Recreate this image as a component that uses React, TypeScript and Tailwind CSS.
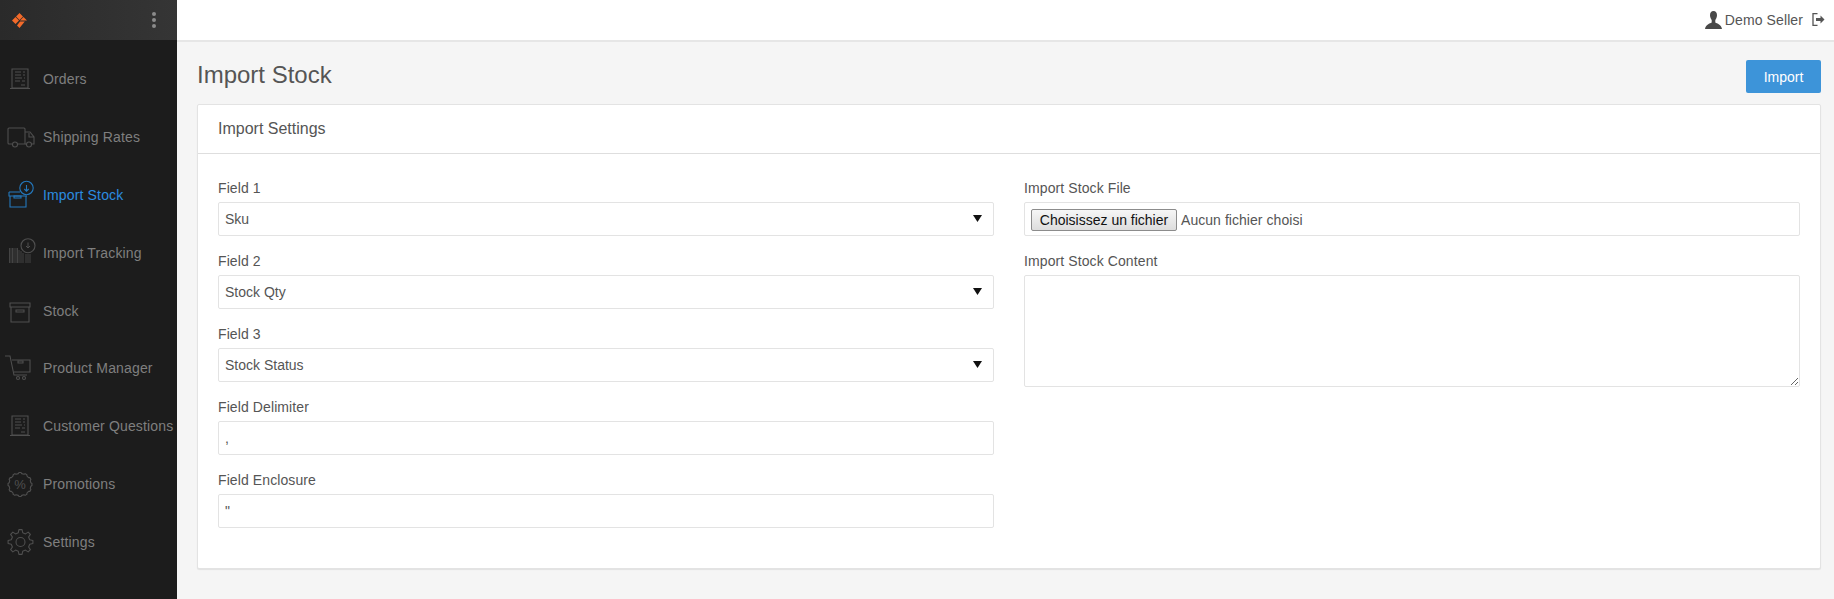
import type { ReactNode } from 'react'

const FONT = "font-['Liberation_Sans',Arial,sans-serif]"

// teeth / scallops for the settings and promotions icons
function ringPath(cx: number, cy: number, points: number, outer: number, inner: number) {
  const out: string[] = []
  for (let i = 0; i < points; i++) {
    const step = (Math.PI * 2) / points
    const a = i * step - Math.PI / 2
    const corners: [number, number][] = [
      [inner, a - step * 0.3],
      [outer, a - step * 0.16],
      [outer, a + step * 0.16],
      [inner, a + step * 0.3],
    ]
    corners.forEach(([r, t], j) => {
      const cmd = i === 0 && j === 0 ? 'M' : 'L'
      out.push(`${cmd}${(cx + r * Math.cos(t)).toFixed(2)} ${(cy + r * Math.sin(t)).toFixed(2)}`)
    })
  }
  return out.join('') + 'z'
}

function ReceiptIcon() {
  return (
    <>
      <path d="M9 8h16v19H9zM7 27.500h20" />
      <path d="M12 11h6M20 11h2M12 14h6M20 14h2M12 17h7M21 17h1M12 20h5M19 20h3M18 24h4" strokeWidth="1" />
    </>
  )
}

const ICONS: Record<string, ReactNode> = {
  orders: <ReceiptIcon />,
  shipping: (
    <>
      <path d="M9 25H6a1 1 0 0 1-1-1V10a1 1 0 0 1 1-1h15a1 1 0 0 1 1 1v15h-8" />
      <path d="M22 13h5l4 5v7h-3M22 25h1M26 14v4h5" />
      <circle cx="12" cy="25.500" r="2.500" />
      <circle cx="26" cy="25.500" r="2.500" />
    </>
  ),
  import: (
    <>
      <path d="M6 15h11M6 15v4h18M7 19v11h16V19" />
      <path d="M11 19h7v2h-7z" />
      <circle cx="23.500" cy="11" r="6.700" />
      <path d="M23.500 8v6M21.300 12l2.200 2.200 2.200-2.200" />
    </>
  ),
  tracking: (
    <>
      <path d="M6.500 13v15M8 13v15M9.500 13v15M11 13v15M13 13v15M14.500 13v15M16 15v13M18 16v12M20 18v10M23 19v9M25 19v9M27 19v9" strokeWidth=".8" />
      <circle cx="25" cy="10.700" r="7" />
      <path d="M25 7.500v5.500M23 11l2 2 2-2" strokeWidth="1" />
    </>
  ),
  stock: (
    <>
      <path d="M7 10h20v4H7zM8 14v15h18V14" />
      <path d="M13 17h8v2h-8z" />
    </>
  ),
  product: (
    <>
      <path d="M2 6h5l4 19h13" />
      <path d="M9 10h18v12H11" />
      <path d="M15 11h5v2h-5z" />
      <circle cx="15" cy="28" r="1.500" />
      <circle cx="21" cy="28" r="1.500" />
    </>
  ),
  questions: <ReceiptIcon />,
  promotions: (
    <>
      <path d={ringPath(17, 18.500, 12, 12, 11)} strokeLinejoin="round" />
      <text x="17" y="23" textAnchor="middle" fontSize="13" fill="currentColor" stroke="none" fontFamily="Liberation Sans">%</text>
    </>
  ),
  settings: (
    <>
      <path d={ringPath(17.500, 18, 8, 12.500, 9.500)} strokeLinejoin="round" />
      <circle cx="17.500" cy="18" r="4.500" />
    </>
  ),
}

const NAV = [
  { id: 'orders', label: 'Orders' },
  { id: 'shipping', label: 'Shipping Rates' },
  { id: 'import', label: 'Import Stock', active: true },
  { id: 'tracking', label: 'Import Tracking' },
  { id: 'stock', label: 'Stock' },
  { id: 'product', label: 'Product Manager' },
  { id: 'questions', label: 'Customer Questions' },
  { id: 'promotions', label: 'Promotions' },
  { id: 'settings', label: 'Settings' },
]

function Sidebar() {
  return (
    <aside className="w-[177px] shrink-0 bg-[#1c1c1c]">
      <div className="h-10 flex items-center justify-between bg-gradient-to-r from-[#2a2a2a] to-[#353535] pl-[12px] pr-[21px]">
        <svg width="15" height="15" viewBox="0 0 15 15" fill="#f26a2a">
          <path d="M7.500 0 11 3.500 7.500 7 4 3.500zM3.500 4 7 7.500 3.500 11 0 7.500zM8 7.500l3.500-3.500L15 7.500H8zM8 8.500h4.800L7.500 15 5 12.500z" />
        </svg>
        <div className="flex flex-col gap-[2px]">
          <span className="w-1 h-1 rounded-full bg-[#8b8b8b]" />
          <span className="w-1 h-1 rounded-full bg-[#8b8b8b]" />
          <span className="w-1 h-1 rounded-full bg-[#8b8b8b]" />
        </div>
      </div>
      <nav className="pt-[10px]">
        {NAV.map((item) => (
          <div
            key={item.id}
            className={`h-[57.900px] flex items-center text-sm tracking-[0.15px] whitespace-nowrap ${item.active ? 'text-[#2b8ce0]' : 'text-[#7f7f7f]'}`}
          >
            <span className={`w-[43px] shrink-0 pl-[3px] ${item.active ? 'text-[#2478bd]' : 'text-[#4f4f4f]'}`}>
              <svg width="36" height="36" viewBox="0 0 36 36" fill="none" stroke="currentColor" strokeWidth="1.100">
                {ICONS[item.id]}
              </svg>
            </span>
            {item.label}
          </div>
        ))}
      </nav>
    </aside>
  )
}

function TopBar() {
  return (
    <header className="h-[42px] bg-white border-b-2 border-[#e6e6e6] flex items-center justify-end pb-[1px] pr-[9px] text-sm text-[#555]">
      <svg width="17" height="18" viewBox="0 0 17 18" fill="#484848" className="mr-[3px]">
        <path d="M8.500 0c2.300 0 3.500 1.800 3.500 4.200 0 1.800-.8 3.600-1.700 4.800v2.500c1.800 1.200 6 1.800 6.700 6.500H0c.7-4.700 4.900-5.300 6.700-6.500V9C5.800 7.800 5 6 5 4.200 5 1.800 6.200 0 8.500 0z" />
      </svg>
      <span className="tracking-[0.1px]">Demo Seller</span>
      <svg width="13" height="13" viewBox="0 0 13 13" className="ml-[9px]" fill="none" stroke="#555" strokeWidth="1.300">
        <path d="M5.500.7H1v11.600h4.500" />
        <path d="M4 5h4.500V2.500L12.500 6.500l-4 4V8H4z" fill="#555" stroke="none" />
      </svg>
    </header>
  )
}

function Field({ label, children }: { label: string; children: ReactNode }) {
  return (
    <div className="mb-[15px]">
      <label className="block h-5 leading-5 mb-1 text-sm tracking-[0.1px] text-[#555]">{label}</label>
      {children}
    </div>
  )
}

const CONTROL = 'w-full h-[34px] bg-white border border-[#e3e3e3] rounded-[2px] px-[6px] text-sm text-[#555] outline-none'

function SelectField({ label, value }: { label: string; value: string }) {
  return (
    <Field label={label}>
      <div className="relative">
        <select defaultValue={value} className={`${CONTROL} appearance-none ${FONT}`}>
          <option>{value}</option>
        </select>
        <svg width="9" height="7" viewBox="0 0 9 7" fill="#111" className="absolute right-[12px] top-[13px]">
          <path d="M0 0h9L4.500 7z" />
        </svg>
      </div>
    </Field>
  )
}

function TextField({ label, value }: { label: string; value: string }) {
  return (
    <Field label={label}>
      <input defaultValue={value} className={`${CONTROL} ${FONT}`} />
    </Field>
  )
}

export default function App() {
  return (
    <div className={`flex h-[599px] overflow-hidden bg-[#f5f5f5] ${FONT}`}>
      <Sidebar />
      <div className="flex-1 min-w-0">
        <TopBar />
        <main className="pl-[20px] pr-[13px] pt-[18px]">
          <div className="flex items-center justify-between h-[33px] mb-[11px]">
            <h1 className="text-2xl text-[#555] pb-[3px]">Import Stock</h1>
            <button className="w-[75px] h-[33px] bg-[#3d94d9] text-white text-sm rounded-[2px]">Import</button>
          </div>
          <section className="bg-white border border-[#e3e3e3] rounded-[2px] shadow-[0_1px_1px_rgba(0,0,0,0.08)]">
            <div className="h-[49px] flex items-center px-5 border-b border-[#dedede] text-base text-[#555]">
              Import Settings
            </div>
            <div className="grid grid-cols-2 gap-x-[30px] px-5 pt-[24px] pb-[25px]">
              <div>
                <SelectField label="Field 1" value="Sku" />
                <SelectField label="Field 2" value="Stock Qty" />
                <SelectField label="Field 3" value="Stock Status" />
                <TextField label="Field Delimiter" value="," />
                <TextField label="Field Enclosure" value={'"'} />
              </div>
              <div>
                <Field label="Import Stock File">
                  <div className={`${CONTROL} flex items-center whitespace-nowrap pt-[2px]`}>
                    <button className="h-[22px] w-[146px] border border-[#8c8c8c] rounded-[2px] bg-gradient-to-b from-[#f6f6f6] to-[#dddddd] text-[#111] text-sm">
                      Choisissez un fichier
                    </button>
                    <span className="ml-1 tracking-[0.05px]">Aucun fichier choisi</span>
                  </div>
                </Field>
                <Field label="Import Stock Content">
                  <textarea className={`${CONTROL} !h-[112px] block ${FONT}`} />
                </Field>
              </div>
            </div>
          </section>
        </main>
      </div>
    </div>
  )
}
